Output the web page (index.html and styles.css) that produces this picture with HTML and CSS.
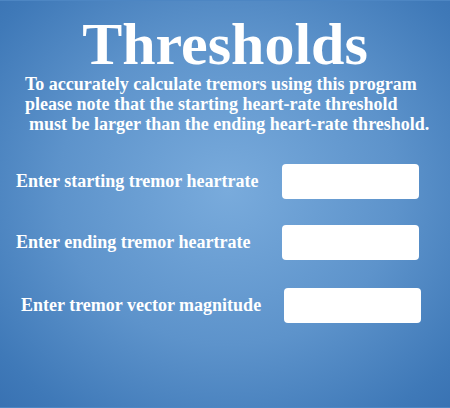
FILE: index.html
```html
<!DOCTYPE html>
<html>
<head>
<meta charset="utf-8">
<link rel="stylesheet" href="styles.css">
</head>
<body>
<div class="page">
  <h1 class="title">Thresholds</h1>
  <div class="note">
    <div class="line l1">To accurately calculate tremors using this program</div>
    <div class="line l2">please note that the starting heart-rate threshold</div>
    <div class="line l3">must be larger than the ending heart-rate threshold.</div>
  </div>
  <div class="form">
    <div class="row r1">
      <label class="label">Enter starting tremor heartrate</label>
      <input class="field" type="text">
    </div>
    <div class="row r2">
      <label class="label">Enter ending tremor heartrate</label>
      <input class="field" type="text">
    </div>
    <div class="row r3">
      <label class="label">Enter tremor vector magnitude</label>
      <input class="field" type="text">
    </div>
  </div>
</div>
</body>
</html>
```

FILE: styles.css
```css
html, body {
  margin: 0;
  padding: 0;
  width: 450px;
  height: 408px;
  overflow: hidden;
}
body {
  background: radial-gradient(ellipse 340px 310px at 228px 190px, #79abdc 0%, #5d93cb 50%, #3f79b8 85%, #3770b1 100%);
  font-family: "Liberation Serif", "Times New Roman", serif;
  color: #ffffff;
  font-weight: bold;
}
.page {
  display: flex;
  flex-direction: column;
  height: 408px;
  box-sizing: border-box;
  border-top: 1px solid #4d86c3;
  border-bottom: 1px solid #4d86c3;
}
.title {
  margin: 0;
  font-size: 60px;
  line-height: 60px;
  text-align: center;
  padding-top: 13px;
  padding-left: 0;
}
.note {
  font-size: 18px;
  line-height: 20px;
  margin-top: 0;
}
.line { white-space: nowrap; }
.l1 { padding-left: 25px; }
.l2 { padding-left: 25px; }
.l3 { padding-left: 29px; }
.form {
  display: flex;
  flex-direction: column;
  margin-top: 30px;
}
.row {
  display: flex;
  align-items: center;
  justify-content: space-between;
  height: 35px;
}
.r1 { padding: 0 31px 0 16px; }
.r2 { padding: 0 31px 0 16px; margin-top: 26px; }
.r3 { padding: 0 29px 0 21px; margin-top: 28px; }
.label {
  font-size: 18px;
}
.field {
  width: 137px;
  height: 35px;
  box-sizing: border-box;
  border: none;
  border-radius: 4px;
  background: #ffffff;
  padding: 0;
  outline: none;
}
```
